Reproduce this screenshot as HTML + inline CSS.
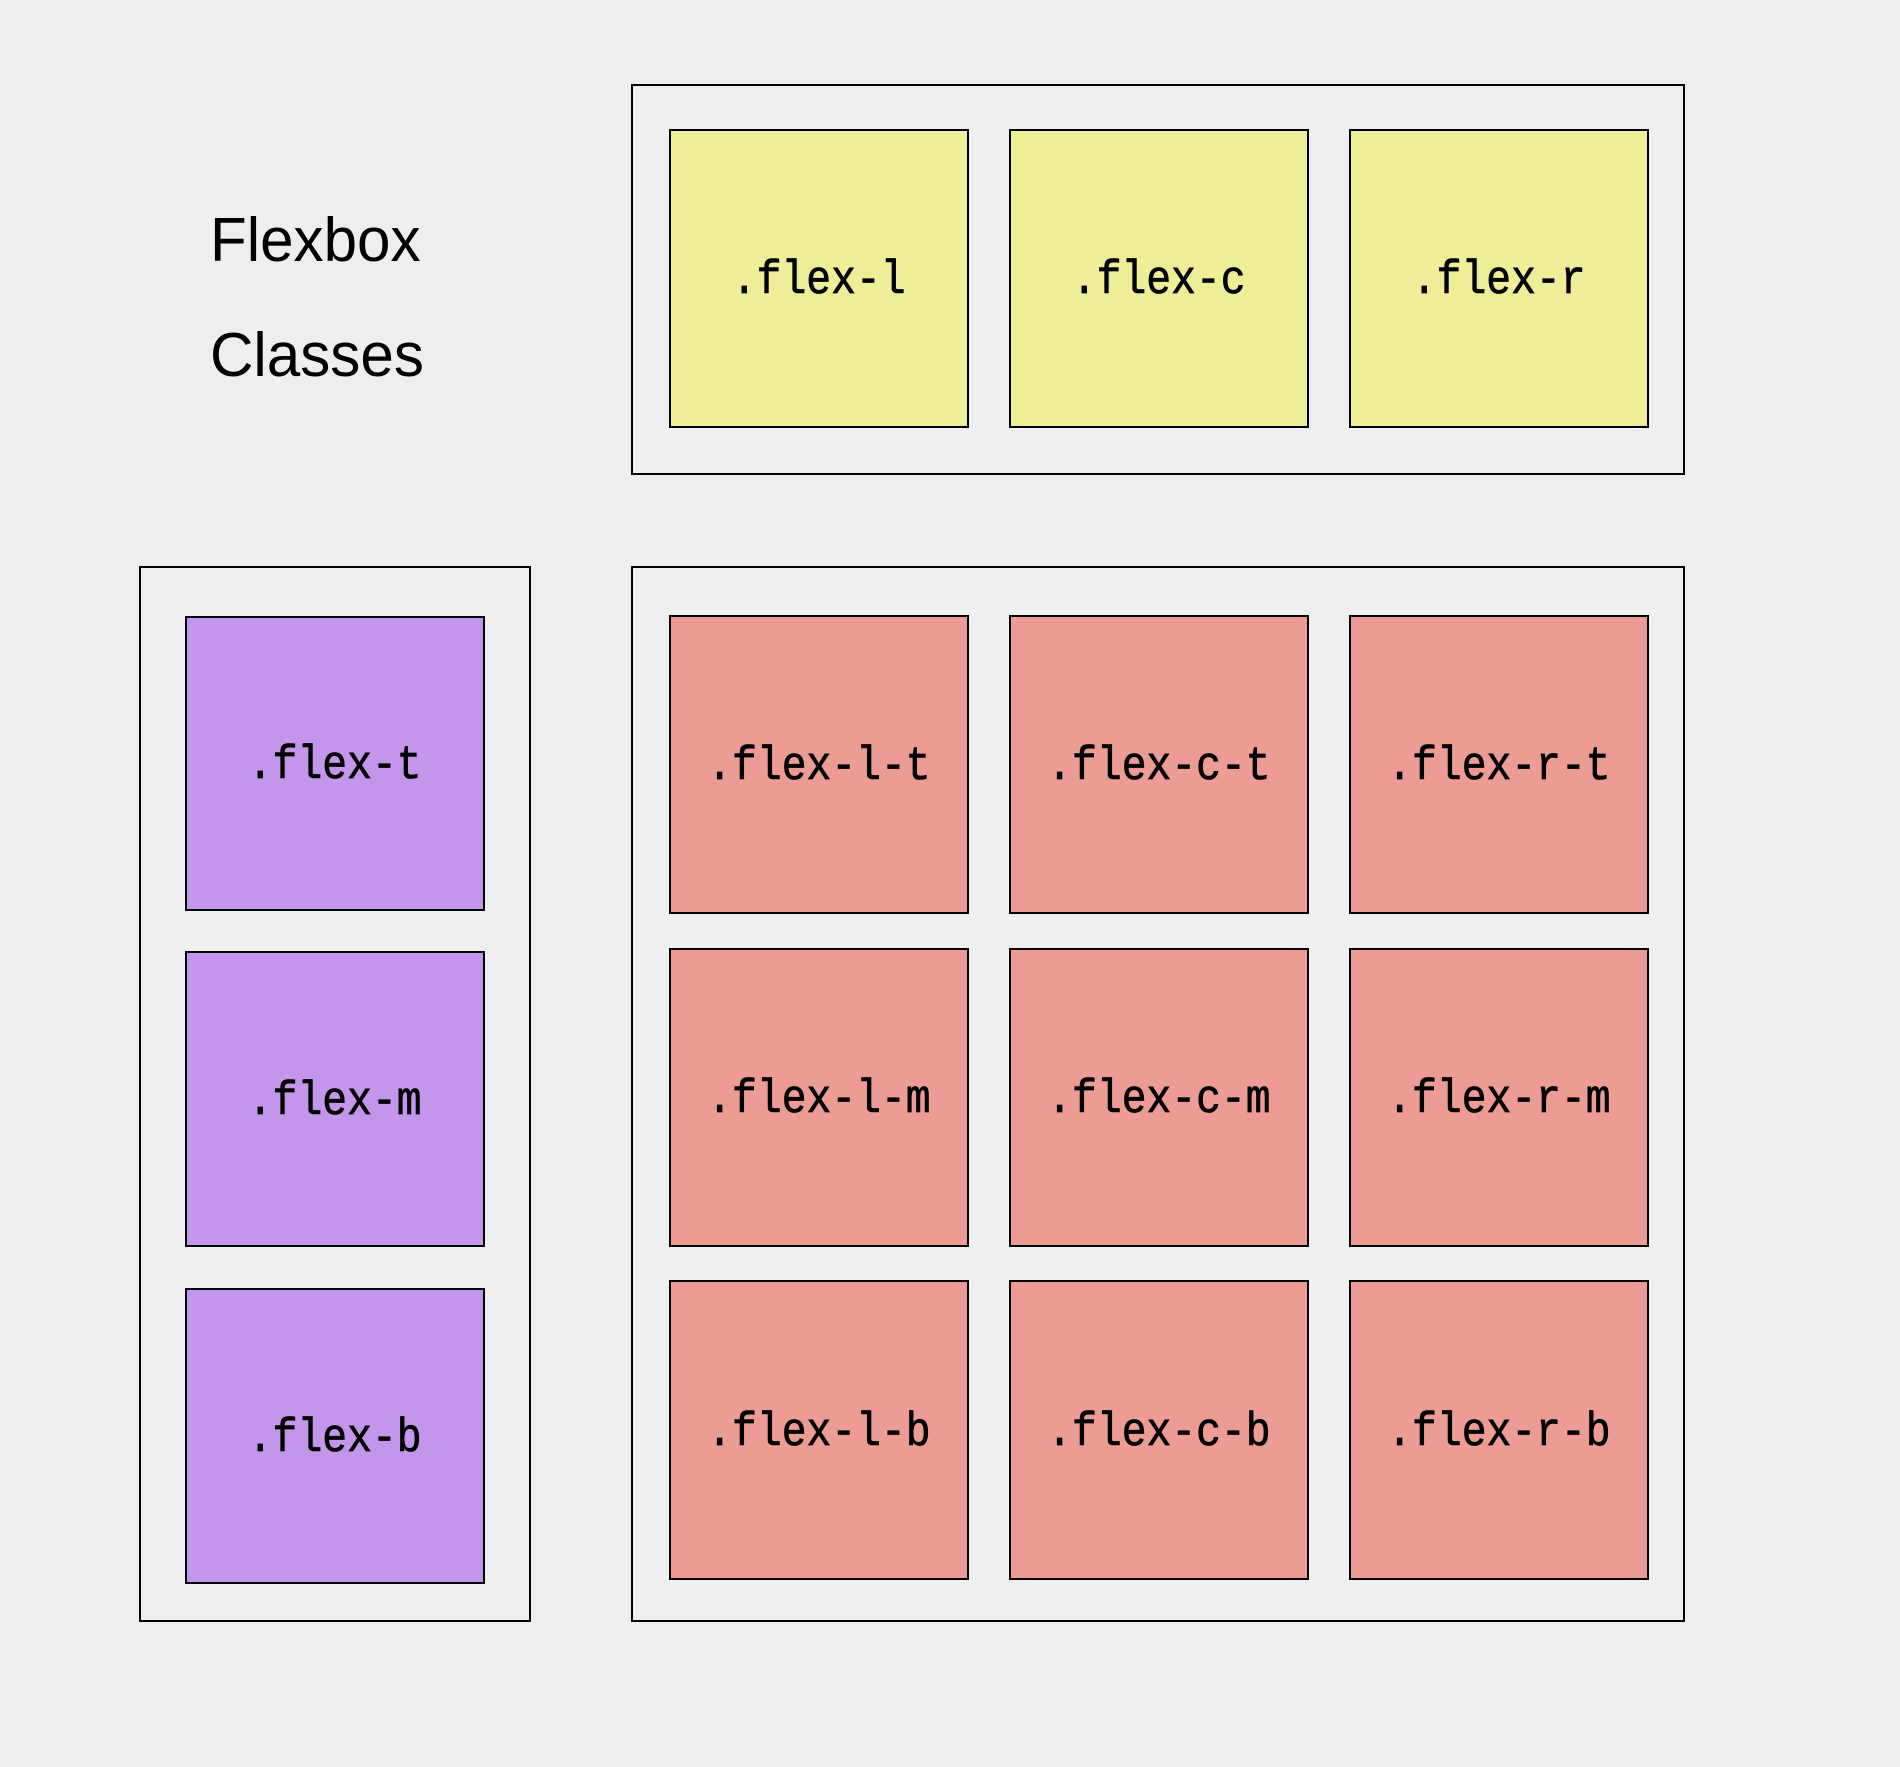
<!DOCTYPE html>
<html><head><meta charset="utf-8"><style>
html,body{margin:0;padding:0;}
body{width:1900px;height:1767px;background:#eeeeee;position:relative;overflow:hidden;}
.b{position:absolute;box-sizing:border-box;border:2px solid #000;}
.o{background:#efefef;}
.c{display:flex;align-items:center;justify-content:center;font-family:"Liberation Mono",monospace;font-size:47px;color:#000;padding-top:6px;}
.c span{display:inline-block;transform:scaleX(0.88);-webkit-text-stroke:0.8px #000;}
.y{background:#eeee99;}
.p{background:#c396ec;}
.r{background:#ed9c95;}
.t{position:absolute;font-family:"Liberation Sans",sans-serif;font-size:62px;color:#000;transform:scaleX(0.97);transform-origin:left center;font-weight:300;}
</style></head><body>
<div class="t" style="left:210px;top:205px;">Flexbox</div>
<div class="t" style="left:210px;top:320px;">Classes</div>

<div class="b o" style="left:631px;top:84px;width:1054px;height:391px;"></div>
<div class="b c y" style="left:669px;top:129px;width:300px;height:299px;"><span>.flex-l</span></div>
<div class="b c y" style="left:1009px;top:129px;width:300px;height:299px;"><span>.flex-c</span></div>
<div class="b c y" style="left:1349px;top:129px;width:300px;height:299px;"><span>.flex-r</span></div>

<div class="b o" style="left:139px;top:566px;width:392px;height:1056px;"></div>
<div class="b c p" style="left:185px;top:616px;width:300px;height:295px;"><span>.flex-t</span></div>
<div class="b c p" style="left:185px;top:951px;width:300px;height:296px;"><span>.flex-m</span></div>
<div class="b c p" style="left:185px;top:1288px;width:300px;height:296px;"><span>.flex-b</span></div>

<div class="b o" style="left:631px;top:566px;width:1054px;height:1056px;"></div>
<div class="b c r" style="left:669px;top:615px;width:300px;height:299px;"><span>.flex-l-t</span></div>
<div class="b c r" style="left:1009px;top:615px;width:300px;height:299px;"><span>.flex-c-t</span></div>
<div class="b c r" style="left:1349px;top:615px;width:300px;height:299px;"><span>.flex-r-t</span></div>
<div class="b c r" style="left:669px;top:948px;width:300px;height:299px;"><span>.flex-l-m</span></div>
<div class="b c r" style="left:1009px;top:948px;width:300px;height:299px;"><span>.flex-c-m</span></div>
<div class="b c r" style="left:1349px;top:948px;width:300px;height:299px;"><span>.flex-r-m</span></div>
<div class="b c r" style="left:669px;top:1280px;width:300px;height:300px;"><span>.flex-l-b</span></div>
<div class="b c r" style="left:1009px;top:1280px;width:300px;height:300px;"><span>.flex-c-b</span></div>
<div class="b c r" style="left:1349px;top:1280px;width:300px;height:300px;"><span>.flex-r-b</span></div>
</body></html>
